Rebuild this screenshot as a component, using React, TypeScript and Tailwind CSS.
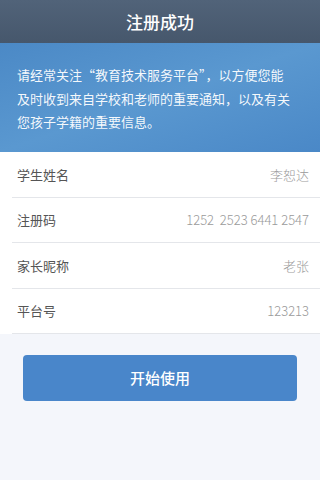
const rows = [
  { label: "学生姓名", value: "李恕达" },
  { label: "注册码", value: "1252  2523 6441 2547" },
  { label: "家长昵称", value: "老张" },
  { label: "平台号", value: "123213" },
];

const font = { fontFamily: '"Noto Sans CJK SC", "Noto Sans", sans-serif' };

export default function App() {
  return (
    <div className="flex h-[480px] w-[320px] flex-col overflow-hidden bg-[#f4f6fb]" style={font}>
      <header className="flex h-[43px] items-center justify-center bg-gradient-to-b from-[#516379] to-[#46576c]">
        <h1 className="text-[17px] font-medium text-white">注册成功</h1>
      </header>

      <section className="h-[109px] bg-gradient-to-br from-[#4b89c6] via-[#5a98d0] to-[#4a88c7] px-[17px] pt-[20px] text-[13px] leading-[23.5px] text-white/95">
        <p className="whitespace-nowrap">请经常关注“教育技术服务平台”，以方便您能</p>
        <p className="whitespace-nowrap">及时收到来自学校和老师的重要通知，以及有关</p>
        <p className="whitespace-nowrap">您孩子学籍的重要信息。</p>
      </section>

      <div className="bg-white pl-[12px]">
        {rows.map((row) => (
          <div
            key={row.label}
            className="flex h-[45.5px] items-center justify-between border-b border-[#e4e6ea] pl-[5px] pr-[11px]"
          >
            <span className="text-[13px] text-[#555]">{row.label}</span>
            <span className="whitespace-pre text-[13px] font-light text-[#9a9a9a]">{row.value}</span>
          </div>
        ))}
      </div>

      <div className="px-[23px] pt-[21px]">
        <button className="flex h-[46px] w-full items-center justify-center rounded-[4px] bg-[#4986ca] text-[15px] font-medium text-white">
          开始使用
        </button>
      </div>
    </div>
  );
}
